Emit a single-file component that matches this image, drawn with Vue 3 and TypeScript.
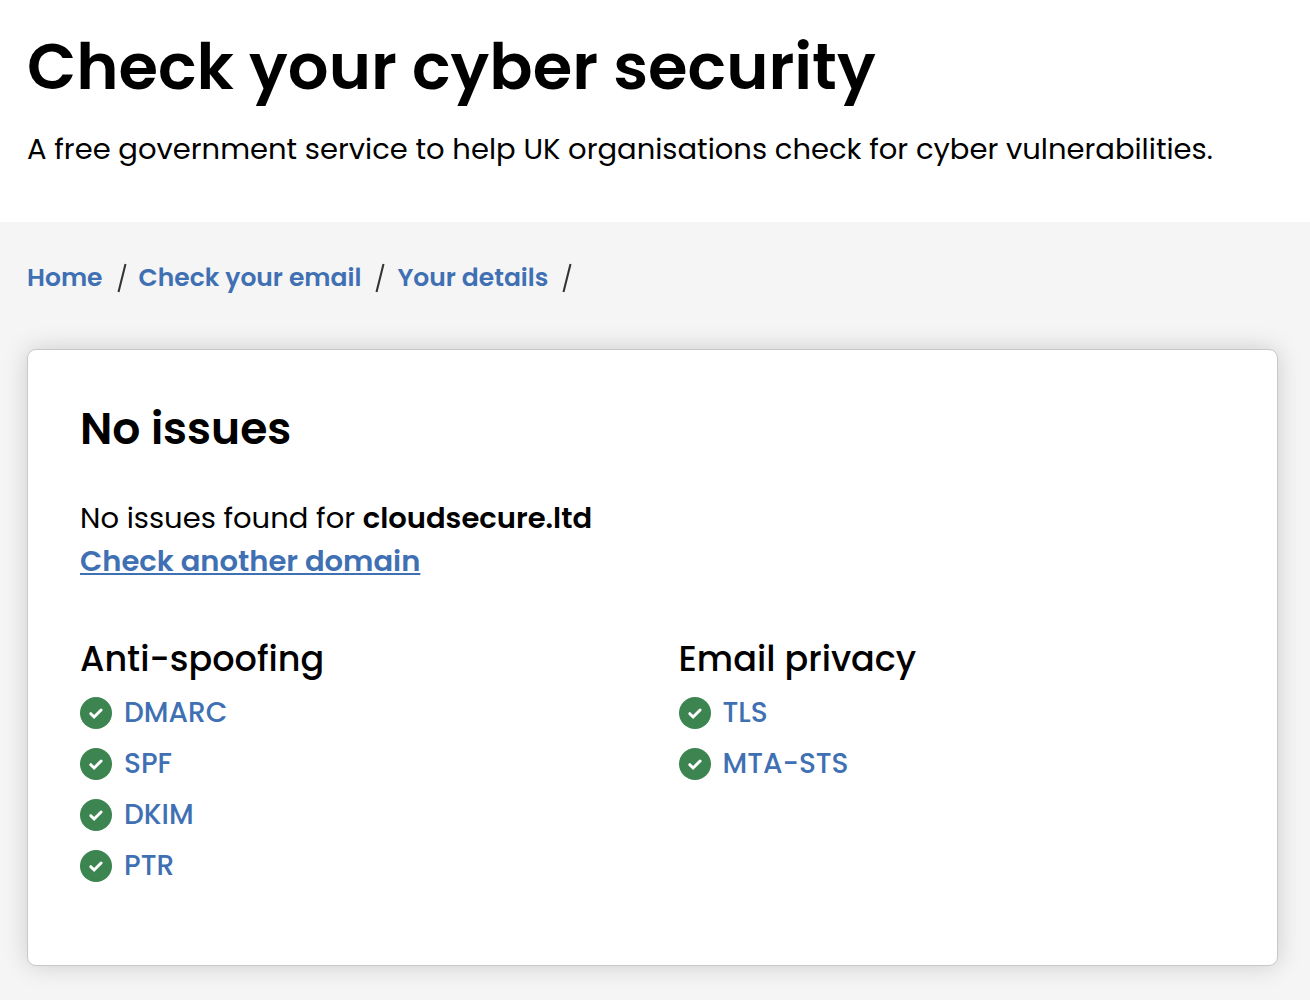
<script setup lang="ts">
interface CheckGroup {
  title: string
  checks: string[]
}

const crumbs: string[] = ['Home', 'Check your email', 'Your details']

const groups: CheckGroup[] = [
  { title: 'Anti-spoofing', checks: ['DMARC', 'SPF', 'DKIM', 'PTR'] },
  { title: 'Email privacy', checks: ['TLS', 'MTA-STS'] },
]
</script>

<template>
  <div class="page">
    <header class="masthead">
      <h1>Check your cyber security</h1>
      <p>A free government service to help UK organisations check for cyber vulnerabilities.</p>
    </header>
    <main>
      <nav aria-label="Breadcrumb">
        <ol class="crumbs">
          <li v-for="crumb in crumbs" :key="crumb">
            <a href="#">{{ crumb }}</a>
            <svg class="slash" viewBox="0 0 10 30" aria-hidden="true"><path d="M8.500 1 1.500 29" /></svg>
          </li>
        </ol>
      </nav>
      <section class="card">
        <h2>No issues</h2>
        <p class="summary">No issues found for <strong>cloudsecure.ltd</strong></p>
        <a class="another" href="#">Check another domain</a>
        <div class="groups">
          <section v-for="group in groups" :key="group.title">
            <h3>{{ group.title }}</h3>
            <ul>
              <li v-for="check in group.checks" :key="check">
                <svg class="tick" viewBox="0 0 32 32" aria-hidden="true">
                  <circle cx="16" cy="16" r="16" />
                  <path d="m10.800 16.700 3.300 3.300 7-7" />
                </svg>
                <a href="#">{{ check }}</a>
              </li>
            </ul>
          </section>
        </div>
      </section>
    </main>
  </div>
</template>

<style>
body {
  margin: 0;
  background: #f5f5f5;
}
</style>

<style scoped>
.page {
  font-family: Poppins, Inter, "Open Sans", sans-serif;
  color: #000;
  min-height: 100vh;
}
h1, h2, h3, p, ul, ol {
  margin: 0;
  padding: 0;
}
ul, ol {
  list-style: none;
}
a {
  color: #3f70b3;
  text-decoration: none;
}
.masthead {
  background: #fff;
  padding: 23px 27px 51px;
}
h1 {
  font-size: 64px;
  line-height: 88px;
  font-weight: 600;
}
.masthead p {
  font-size: 29px;
  line-height: 44px;
  margin-top: 16px;
}
main {
  padding: 36px 32px 34px 27px;
}
.crumbs {
  display: flex;
  flex-wrap: wrap;
  font-size: 25px;
  line-height: 40px;
  font-weight: 600;
}
.crumbs li {
  display: flex;
  align-items: center;
}
.slash {
  width: 10px;
  height: 30px;
  margin: 0 12px 0 14px;
  fill: none;
  stroke: #333;
  stroke-width: 2;
}
.card {
  margin-top: 51px;
  padding: 47px 52px 74px;
  background: #fff;
  border: 1px solid #c8c8c8;
  border-radius: 9px;
  box-shadow: 0 0 24px rgba(0, 0, 0, 0.17);
}
h2 {
  font-size: 44px;
  line-height: 64px;
  font-weight: 600;
}
.summary {
  font-size: 29px;
  line-height: 43px;
  margin-top: 36px;
}
.summary strong {
  font-weight: 600;
}
.another {
  font-size: 29px;
  line-height: 43px;
  font-weight: 600;
  text-decoration: underline;
}
.groups {
  display: grid;
  grid-template-columns: 1fr 1fr;
  column-gap: 52px;
  margin-top: 50px;
}
h3 {
  font-size: 35px;
  line-height: 52px;
  font-weight: 500;
  margin-bottom: 2px;
}
.groups li {
  display: flex;
  align-items: center;
  gap: 12px;
  height: 51px;
  font-size: 28px;
  font-weight: 500;
}
.tick {
  width: 32px;
  height: 32px;
}
.tick circle {
  fill: #3c8450;
}
.tick path {
  fill: none;
  stroke: #fff;
  stroke-width: 3;
  stroke-linecap: round;
}
</style>
